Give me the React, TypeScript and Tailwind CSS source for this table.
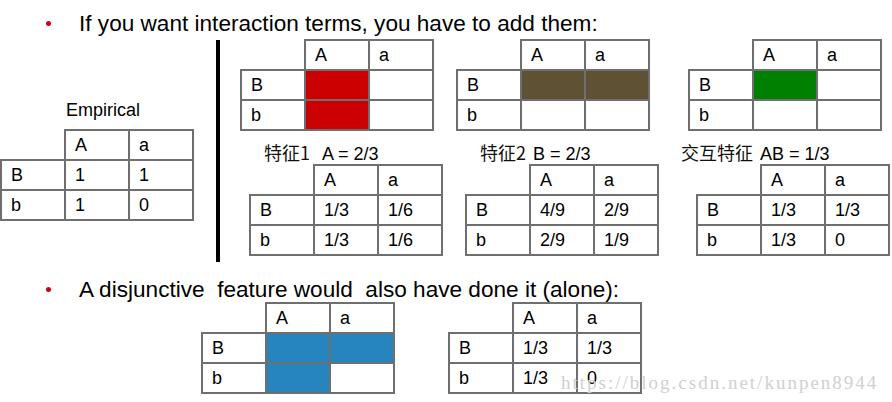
import clsx from "clsx";

type Cell = { t?: string; bg?: string };

const row = (label: string, a: Cell, b: Cell): Cell[] => [{ t: label }, a, b];

function Table({ rows, className }: { rows: Cell[][]; className?: string }) {
  const cells: Cell[] = [{}, { t: "A" }, { t: "a" }, ...rows.flat()];
  return (
    <div
      className={clsx(
        "grid grid-cols-[64px_64px_64px] grid-rows-[30px_30px_30px] w-[194px] shrink-0 pl-[2px] pt-[2px]",
        className
      )}
    >
      {cells.map((c, i) =>
        i === 0 ? (
          <div key={i} />
        ) : (
          <div
            key={i}
            className={clsx(
              "ml-[-2px] mt-[-2px] border-2 border-[#6f6f6f] flex items-center pl-[9px] text-[18px] leading-none",
              c.bg ?? "bg-white"
            )}
          >
            {c.t}
          </div>
        )
      )}
    </div>
  );
}

function Bullet({ children }: { children: React.ReactNode }) {
  return (
    <div className="flex items-start">
      <span className="ml-[46px] mt-[10px] w-[5px] h-[5px] rounded-full bg-[#c8001e] shrink-0" />
      <span className="ml-[28px] text-[22.6px] leading-[26px] whitespace-pre">{children}</span>
    </div>
  );
}

function Label({ zh, en, gap, className }: { zh: string; en: string; gap: string; className?: string }) {
  return (
    <div className={clsx("mt-[11px] h-[20px] leading-[20px] text-[18px] whitespace-nowrap", className)}>
      <span className="font-['Noto_Sans_CJK_SC',sans-serif] text-[#111]">{zh}</span>
      <span className={gap}>{en}</span>
    </div>
  );
}

const red = "bg-[#cc0000]";
const brown = "bg-[#5e5134]";
const green = "bg-[#008000]";
const blue = "bg-[#2684be]";

export default function App() {
  return (
    <div className="relative w-[892px] h-[402px] overflow-hidden bg-white text-black font-['Liberation_Sans',Arial,sans-serif]">
      <div className="h-[40px] pt-[11px]">
        <Bullet>If you want interaction terms, you have to add them:</Bullet>
      </div>

      <div className="flex h-[222px]">
        <div className="w-[216px] shrink-0">
          <div className="mt-[59px] pl-[66px] text-[18px] leading-[22px]">Empirical</div>
          <Table
            className="mt-[8px]"
            rows={[row("B", { t: "1" }, { t: "1" }), row("b", { t: "1" }, { t: "0" })]}
          />
        </div>

        <div className="w-[4px] shrink-0 bg-black" />

        <div className="flex-1">
          <div className="flex -mt-px">
            <Table className="ml-[20px]" rows={[row("B", { bg: red }, {}), row("b", { bg: red }, {})]} />
            <Table className="ml-[22px]" rows={[row("B", { bg: brown }, { bg: brown }), row("b", {}, {})]} />
            <Table className="ml-[38px]" rows={[row("B", { bg: green }, {}), row("b", {}, {})]} />
          </div>

          <div className="flex">
            <div className="ml-[29px]">
              <Label className="pl-[15px]" zh="特征1" en="A = 2/3" gap="ml-[12px]" />
              <Table
                className="mt-[2px]"
                rows={[row("B", { t: "1/3" }, { t: "1/6" }), row("b", { t: "1/3" }, { t: "1/6" })]}
              />
            </div>
            <div className="ml-[22px]">
              <Label className="pl-[15px]" zh="特征2" en="B = 2/3" gap="ml-[7px]" />
              <Table
                className="mt-[2px]"
                rows={[row("B", { t: "4/9" }, { t: "2/9" }), row("b", { t: "2/9" }, { t: " 1/9" })]}
              />
            </div>
            <div className="ml-[22px]">
              <Label zh="交互特征" en="AB = 1/3" gap="ml-[7px]" />
              <Table
                className="mt-[2px] ml-[15px]"
                rows={[row("B", { t: "1/3" }, { t: "1/3" }), row("b", { t: "1/3" }, { t: "0" })]}
              />
            </div>
          </div>
        </div>
      </div>

      <div className="mt-[15px]">
        <Bullet>A disjunctive  feature would  also have done it (alone):</Bullet>
      </div>

      <div className="flex -mt-px">
        <Table
          className="ml-[201px]"
          rows={[row("B", { bg: blue }, { bg: blue }), row("b", { bg: blue }, {})]}
        />
        <Table
          className="ml-[53px]"
          rows={[row("B", { t: "1/3" }, { t: "1/3" }), row("b", { t: "1/3" }, { t: "0" })]}
        />
      </div>

      <div className="absolute left-[561px] top-[372px] text-[19px] leading-[22px] tracking-[2px] text-[#d0d0d0] font-['Liberation_Serif',serif] whitespace-nowrap pointer-events-none">
        https://blog.csdn.net/kunpen8944
      </div>
    </div>
  );
}
